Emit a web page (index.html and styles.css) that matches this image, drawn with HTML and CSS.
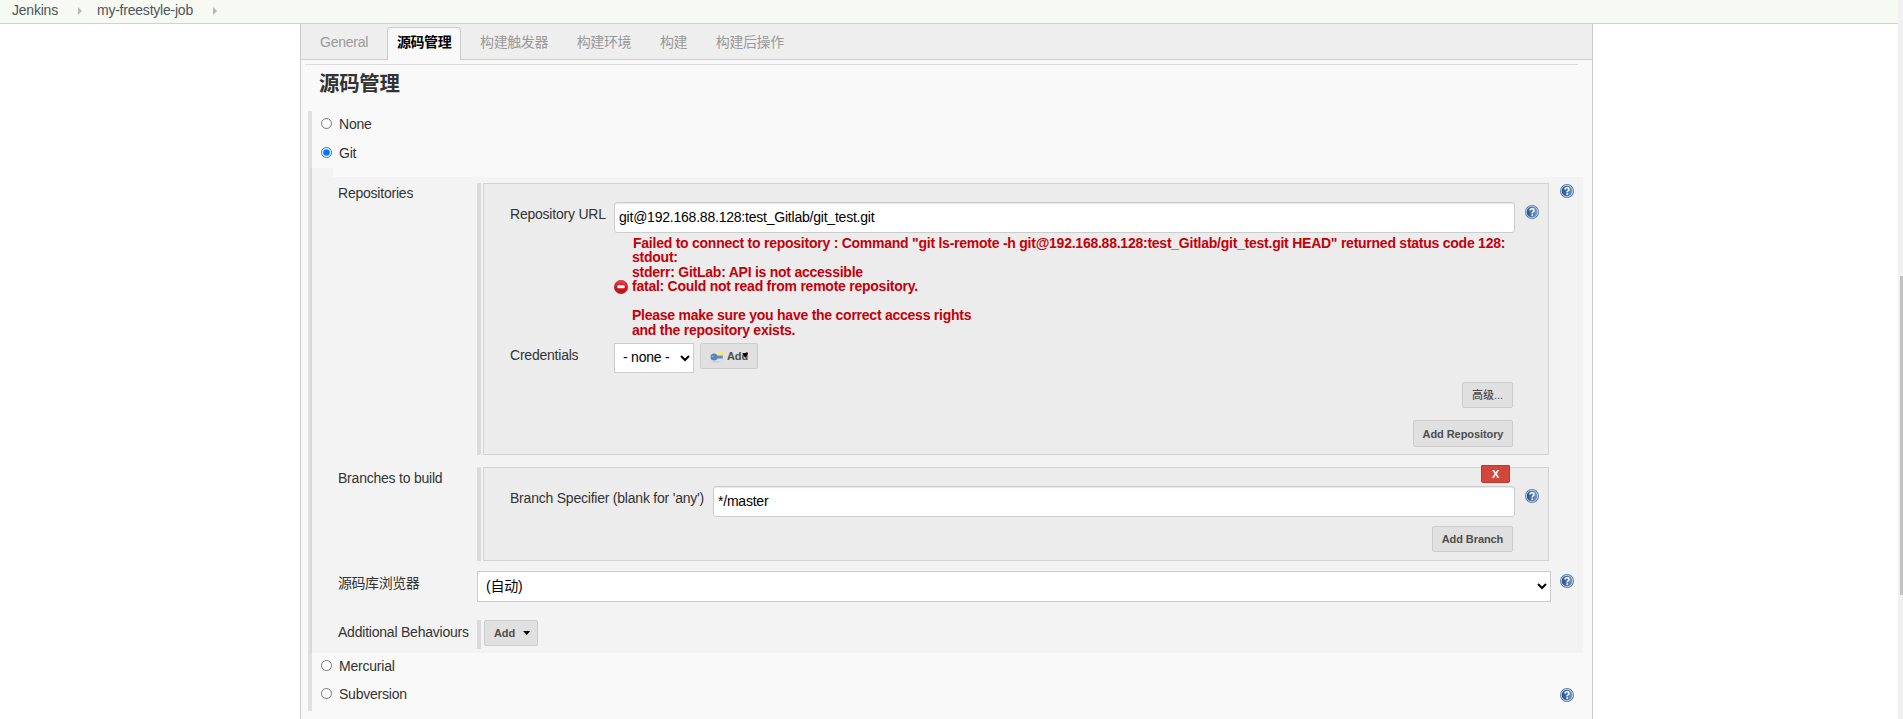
FILE: index.html
```html
<!DOCTYPE html>
<html lang="zh-CN">
<head>
<meta charset="utf-8">
<title>my-freestyle-job Config [Jenkins]</title>
<link rel="stylesheet" href="styles.css">
</head>
<body>
<svg width="0" height="0" class="defs">
  <defs>
    <linearGradient id="blue" x1="0" y1="0" x2="1" y2="0"><stop offset="0" stop-color="#1f4c8c"/><stop offset="1" stop-color="#7f9dc8"/></linearGradient>
    <linearGradient id="red" x1="0" y1="0" x2="0" y2="1"><stop offset="0" stop-color="#ef4a50"/><stop offset=".5" stop-color="#d80f1c"/><stop offset="1" stop-color="#b81620"/></linearGradient>
    <symbol id="help" viewBox="0 0 14 14">
      <circle cx="7" cy="7" r="7" fill="#577db0"/>
      <circle cx="7" cy="7" r="5.7" fill="url(#blue)" stroke="#c6d4e8" stroke-width=".9"/>
      <path d="M5 5.400Q5 3.700 7 3.700T9 5.400Q9 6.400 8 6.900T7.200 8.400" fill="none" stroke="#fff" stroke-width="1.500"/>
      <rect x="6.400" y="9.300" width="1.600" height="1.500" fill="#fff"/>
    </symbol>
  </defs>
</svg>
<header class="crumbs">
  <a>Jenkins</a><i class="sep"></i><a>my-freestyle-job</a><i class="sep"></i>
</header>
<div class="scroll"><div class="thumb"></div></div>
<main class="panel">
  <nav class="tabs">
    <a class="tab latin">General</a><a class="tab active">源码管理</a><a class="tab">构建触发器</a><a class="tab">构建环境</a><a class="tab">构建</a><a class="tab">构建后操作</a>
  </nav>
  <div class="rule"></div>
  <h2>源码管理</h2>
  <section class="scm">
    <label class="choice none"><input type="radio" name="scm">None</label>
    <label class="choice git"><input type="radio" name="scm" checked>Git</label>
    <div class="notch"></div>
    <div class="config">
      <div class="row repos">
        <span class="name">Repositories</span>
        <div class="group">
          <div class="field">
            <span class="label">Repository URL</span>
            <input class="text" type="text" value="git@192.168.88.128:test_Gitlab/git_test.git">
            <svg class="help"><use href="#help"/></svg>
          </div>
          <div class="error">
            <svg class="stop" viewBox="0 0 14 14"><circle cx="7" cy="7" r="6.700" fill="url(#red)" stroke="#b4222b" stroke-width=".6"/><rect x="3.300" y="5.300" width="7.400" height="3" rx=".7" fill="#fff"/></svg>
            <pre><span class="first">Failed to connect to repository : Command "git ls-remote -h git@192.168.88.128:test_Gitlab/git_test.git HEAD" returned status code 128:</span>
stdout:
stderr: GitLab: API is not accessible
fatal: Could not read from remote repository.

Please make sure you have the correct access rights
and the repository exists.</pre>
          </div>
          <div class="field creds">
            <span class="label">Credentials</span>
            <select class="pick"><option>- none -</option></select>
            <button class="btn key"><svg viewBox="0 0 14 12"><ellipse cx="6" cy="10.800" rx="5" ry=".9" fill="#cfcfcf"/><circle cx="10.500" cy="3" r="2.600" fill="#f3ea61"/><path d="M5 4.600h7.800v3H5z" fill="#5f8fc4"/><circle cx="4" cy="6" r="3.500" fill="#5584bb"/><circle cx="2.800" cy="5.600" r="1" fill="#86abd4"/></svg><span>Add</span><i class="caret"></i></button>
          </div>
          <div class="actions"><button class="btn adv">高级...</button><button class="btn addrepo">Add Repository</button></div>
        </div>
        <svg class="help"><use href="#help"/></svg>
      </div>
      <div class="row branches">
        <span class="name">Branches to build</span>
        <div class="group">
          <button class="remove">X</button>
          <div class="field">
            <span class="label wide">Branch Specifier (blank for 'any')</span>
            <input class="text" type="text" value="*/master">
            <svg class="help"><use href="#help"/></svg>
          </div>
          <div class="actions"><button class="btn addbranch">Add Branch</button></div>
        </div>
      </div>
      <div class="row browser">
        <span class="name">源码库浏览器</span>
        <select class="pick full"><option>(自动)</option></select>
        <svg class="help"><use href="#help"/></svg>
      </div>
      <div class="row extra">
        <span class="name">Additional Behaviours</span>
        <div class="bar"><button class="btn add">Add<i class="caret"></i></button></div>
      </div>
    </div>
    <label class="choice merc"><input type="radio" name="scm">Mercurial</label>
    <label class="choice svn"><input type="radio" name="scm">Subversion<svg class="help"><use href="#help"/></svg></label>
  </section>
</main>
</body>
</html>
```
FILE: styles.css
```css
* { box-sizing: border-box; }
html, body { height: 719px; overflow: hidden; }
body {
  margin: 0;
  background: #fff;
  color: #333;
  font: 14px/20px "Liberation Sans", "Noto Sans CJK SC", sans-serif;
  letter-spacing: -0.22px;
}
input, button, select { font-family: inherit; margin: 0; letter-spacing: inherit; }
.defs { position: absolute; }

.crumbs {
  display: flex;
  height: 24px;
  padding-left: 12px;
  background: #f6faf2;
  border-bottom: 1px solid #d0d3cc;
  color: #4d545d;
}
.crumbs a { line-height: 21px; }
.sep { width: 4px; height: 8px; margin: 7px 15px 0 20px; background: #b5b8b1; clip-path: polygon(0 0, 100% 50%, 0 100%); }

.scroll { position: fixed; right: 0; top: 0; width: 5px; height: 719px; padding: 276px 0 0 2px; background: #f1f1f1; }
.thumb { height: 319px; background: #c1c1c1; }

.panel {
  width: 1293px;
  height: 695px;
  margin-left: 300px;
  background: #f9f9f9;
  border: solid #ccc;
  border-width: 0 1px;
}
.tabs {
  display: flex;
  height: 36px;
  padding: 3px 0 0 9px;
  gap: 8.800px;
  background: #eee;
  border-bottom: 1px solid #ccc;
}
.tab {
  height: 33px;
  padding: 0 9px;
  border: 1px solid transparent;
  border-bottom: 0;
  line-height: 29px;
  color: #999;
  letter-spacing: -0.42px;
  white-space: nowrap;
}
.tab.latin { letter-spacing: -0.24px; }
.tab.active { background: #f9f9f9; border-color: #ccc; border-radius: 4px 4px 0 0; color: #000; font-weight: bold; }
.rule { height: 1px; margin: 4px 14px 0 4px; background: #ddd; }
h2 { margin: 0 0 0 18px; height: 46px; font-size: 20.400px; line-height: 38px; }

.scm { height: 600px; margin-left: 7px; width: 1275px; border-left: 4px solid #e0e0e0; }
.choice { display: flex; align-items: flex-start; height: 29px; padding-left: 9px; }
.choice input { flex: none; width: 11px; height: 11px; margin: 4px 7px 0 0; }
.none { padding-top: 3px; height: 32px; }
.git { height: 25px; }
.notch { width: 23px; height: 9px; margin-left: -2px; background: #f3f3f3; border-left: 2px solid #d8d8d8; }
.config {
  height: 476px;
  margin-left: -2px;
  padding-top: 6px;
  background: #f3f3f3;
  border-left: 2px solid #d8d8d8;
}
.row { display: flex; align-items: flex-start; padding-left: 26px; }
.name { flex: none; width: 139px; white-space: nowrap; }
.help { flex: none; width: 14px; height: 14px; }

.group {
  width: 1072px;
  height: 100%;
  border-left: 4px solid #dadada;
  padding-left: 2px;
  position: relative;
}
.group::before { content: ""; position: absolute; inset: 0 0 0 2px; background: #ececec; border: 1px solid #d3d3d3; }
.group > * { position: relative; }
.repos { height: 272px; }
.repos > .help { margin: 1px 0 0 11px; }
.field { display: flex; align-items: flex-start; padding-left: 27px; }
.repos .field:first-child { padding-top: 19px; }
.label { flex: none; width: 104px; padding-top: 2px; white-space: nowrap; }
.label.wide { width: 203px; }
.text {
  flex: none;
  width: 901px;
  height: 31px;
  padding: 0 4px 2px;
  border: 1px solid #ccc;
  border-radius: 3px;
  box-shadow: inset 0 1px 1px #e8e8e8;
  background: #fff;
  color: #000;
  font-size: 14px;
}
.field .help { margin: 3px 0 0 10px; }
.error { display: flex; align-items: center; height: 101px; padding-top: 2px; margin: 2px 0 0 131px; color: #c4000a; }
.stop { flex: none; width: 14px; height: 14px; margin-right: 4px; }
.error pre { margin: 0; font: bold 14px/14.400px "Liberation Sans", sans-serif; letter-spacing: -0.245px; }
.first { margin-left: 1px; }
.creds { height: 39px; padding-top: 7px; }
.pick {
  width: 80px;
  height: 30px;
  padding: 0 0 2px 4px;
  background-color: #fff;
  border: 1px solid #ccc;
  border-radius: 0;
  color: #000;
  font-size: 14px;
}
.btn {
  height: 26px;
  padding: 0;
  background: #e0e0e0;
  border: 1px solid #ccc;
  border-radius: 2px;
  color: #4d4d4d;
  font-size: 11px;
  font-weight: bold;
  line-height: 24px;
  letter-spacing: -0.08px;
  white-space: nowrap;
}
.key { display: flex; width: 58px; margin-left: 6px; padding-left: 9px; }
.key svg { width: 14px; height: 12px; margin: 7px 3px 0 0; }
.caret { display: inline-block; width: 7px; height: 4px; background: #000; clip-path: polygon(0 0, 100% 0, 50% 100%); }
.key .caret { width: 6px; height: 5px; margin: 9px 0 0 -6px; }
.actions { display: flex; flex-direction: column; align-items: flex-end; padding-right: 36px; }
.repos .actions { padding-top: 7px; }
.adv { width: 51px; font-weight: 500; }
.addrepo { width: 100px; height: 27px; margin-top: 12px; }

.branches { height: 94px; margin-top: 12px; }
.branches .name { padding-top: 1px; }
.remove {
  display: block;
  width: 29px;
  height: 18px;
  margin: -2px 0 0 998px;
  padding: 0;
  background: #d2463c;
  border: 1px solid #b83a30;
  border-radius: 1px 1px 2px 2px;
  color: #fff;
  font-size: 11px;
  font-weight: bold;
  line-height: 16px;
}
.branches .field { padding-top: 3px; }
.branches .text { width: 802px; }
.branches .actions { padding-top: 9px; }
.addbranch { width: 81px; }

.browser { margin-top: 10px; }
.browser .name { padding-top: 2px; letter-spacing: -0.45px; }
.full { width: 1074px; height: 31px; }
.browser .help { margin: 3px 0 0 9px; }

.extra { margin-top: 18px; }
.extra .name { padding-top: 2px; }
.bar { height: 29px; padding-left: 3px; border-left: 4px solid #dadada; }
.add { display: flex; width: 54px; padding-left: 9px; }
.add .caret { margin: 10px 0 0 8px; }

.merc { height: 28px; padding-top: 3px; }
.svn { padding-top: 3px; }
.svn .help { margin: 4px 9px 0 auto; }
```
